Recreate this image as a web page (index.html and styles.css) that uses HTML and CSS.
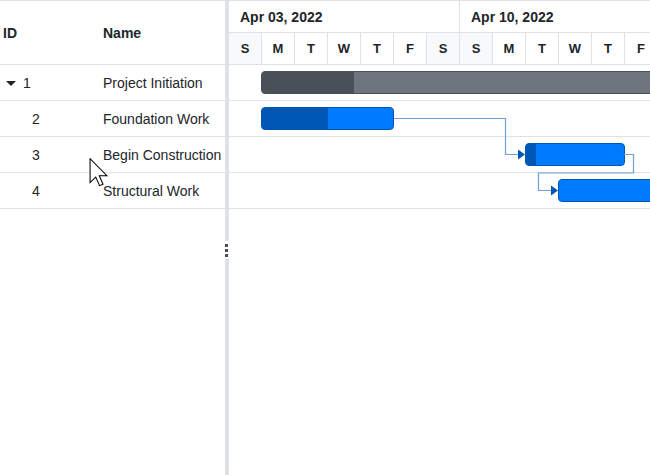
FILE: index.html
```html
<!DOCTYPE html>
<html>
<head>
<meta charset="utf-8">
<link rel="stylesheet" href="styles.css">
</head>
<body>
<div class="gantt">
  <div class="grid">
    <div class="grid-header">
      <div class="col-id">ID</div>
      <div class="col-name">Name</div>
    </div>
    <div class="grid-row">
      <div class="col-id parent"><span class="caret"></span>1</div>
      <div class="col-name">Project Initiation</div>
    </div>
    <div class="grid-row">
      <div class="col-id child">2</div>
      <div class="col-name">Foundation Work</div>
    </div>
    <div class="grid-row">
      <div class="col-id child">3</div>
      <div class="col-name">Begin Construction</div>
    </div>
    <div class="grid-row">
      <div class="col-id child">4</div>
      <div class="col-name">Structural Work</div>
    </div>
  </div>
  <div class="splitter">
    <div class="handle"><span class="dot"></span><span class="dot"></span><span class="dot"></span></div>
  </div>
  <div class="chart">
    <div class="chart-header">
      <div class="months">
        <div class="month">Apr 03, 2022</div>
        <div class="month">Apr 10, 2022</div>
      </div>
      <div class="days">
        <div class="day weekend">S</div>
        <div class="day">M</div>
        <div class="day">T</div>
        <div class="day">W</div>
        <div class="day">T</div>
        <div class="day">F</div>
        <div class="day weekend">S</div>
        <div class="day weekend">S</div>
        <div class="day">M</div>
        <div class="day">T</div>
        <div class="day">W</div>
        <div class="day">T</div>
        <div class="day">F</div>
      </div>
    </div>
    <div class="chart-body">
      <div class="chart-row">
        <div class="bar summary" style="left:32px;width:420px"><div class="progress" style="width:92px"></div></div>
      </div>
      <div class="chart-row">
        <div class="bar task" style="left:32px;width:133px"><div class="progress" style="width:66px"></div></div>
      </div>
      <div class="chart-row">
        <div class="bar task" style="left:296px;width:100px"><div class="progress" style="width:10px"></div></div>
      </div>
      <div class="chart-row">
        <div class="bar task" style="left:329px;width:200px"><div class="progress" style="width:0px"></div></div>
      </div>
      <svg class="links" width="421" height="150" viewBox="0 0 421 150">
        <polyline points="165,53.5 276.5,53.5 276.5,89.5 290,89.5" fill="none" stroke="#6fa0d8" stroke-width="1.2"/>
        <polygon points="289,84.5 296,89.5 289,94.5" fill="#0056b3"/>
        <polyline points="395,89.5 404.5,89.5 404.5,108 309.5,108 309.5,125.5 323,125.5" fill="none" stroke="#6fa0d8" stroke-width="1.2"/>
        <polygon points="322,120.5 329,125.5 322,130.5" fill="#0056b3"/>
      </svg>
    </div>
  </div>
  <svg class="cursor" width="20" height="29" viewBox="0 0 13 19.5">
    <path d="M0.5,0.5 L0.5,16.5 L4.3,12.8 L6.9,18.6 L9.2,17.6 L6.7,11.9 L11.8,11.9 Z" fill="#fff" stroke="#000" stroke-width="0.7" stroke-linejoin="miter"/>
  </svg>
</div>
</body>
</html>
```

FILE: styles.css
```css
html, body {
  margin: 0;
  padding: 0;
  background: #fff;
}

.gantt {
  position: relative;
  display: flex;
  height: 475px;
  box-sizing: border-box;
  border-top: 1px solid #dee2e6;
  font-family: "Liberation Sans", Arial, sans-serif;
  color: #212529;
  overflow: hidden;
}

.grid {
  width: 225px;
  flex: none;
}

.grid-header {
  height: 63px;
  border-bottom: 1px solid #dee2e6;
  display: flex;
  align-items: center;
  font-size: 14px;
  font-weight: bold;
}

.col-id {
  width: 100px;
  padding-left: 3px;
  flex: none;
  display: flex;
  align-items: center;
}

.col-id.parent {
  width: 97px;
  padding-left: 6px;
}

.col-id.child {
  width: 71px;
  padding-left: 32px;
}

.caret {
  width: 0;
  height: 0;
  border-left: 5px solid transparent;
  border-right: 5px solid transparent;
  border-top: 5px solid #212529;
  margin-right: 7px;
  margin-top: 1px;
}

.col-name {
  flex: 1;
  white-space: nowrap;
}

.grid-row {
  height: 35px;
  border-bottom: 1px solid #dee2e6;
  display: flex;
  align-items: center;
  font-size: 14px;
}

.splitter {
  width: 4px;
  flex: none;
  background: #dee2e6;
}

.handle {
  margin-top: 240px;
  height: 18px;
  background: #fff;
  display: flex;
  flex-direction: column;
  gap: 2px;
  padding-top: 3px;
  box-sizing: border-box;
}

.dot {
  display: block;
  width: 3px;
  height: 3px;
  background: #4a4f55;
}

.chart {
  flex: 1;
  min-width: 0;
  overflow: hidden;
}

.months {
  display: flex;
  height: 31px;
  border-bottom: 1px solid #dee2e6;
}

.month {
  flex: none;
  width: 231px;
  box-sizing: border-box;
  border-right: 1px solid #dee2e6;
  padding-left: 11px;
  display: flex;
  align-items: center;
  font-size: 14px;
  font-weight: bold;
  white-space: nowrap;
}

.days {
  display: flex;
  height: 31px;
  border-bottom: 1px solid #dee2e6;
}

.day {
  flex: none;
  width: 33px;
  box-sizing: border-box;
  border-right: 1px solid #dee2e6;
  display: flex;
  align-items: center;
  justify-content: center;
  font-size: 13px;
  font-weight: bold;
}

.day.weekend {
  background: #f8f9fa;
}

.chart-body {
  position: relative;
}

.chart-row {
  position: relative;
  height: 35px;
  border-bottom: 1px solid #dee2e6;
}

.bar {
  position: absolute;
  top: 6px;
  height: 23px;
  box-sizing: border-box;
  border-radius: 4px;
  overflow: hidden;
}

.bar .progress {
  height: 100%;
}

.bar.summary {
  background: #6c757d;
  border: 1px solid #495057;
}

.bar.summary .progress {
  background: #495057;
}

.bar.task {
  background: #007bff;
  border: 1px solid #0056b3;
}

.bar.task .progress {
  background: #0056b3;
}

.links {
  position: absolute;
  left: 0;
  top: 0;
  overflow: visible;
}

.cursor {
  position: absolute;
  left: 89px;
  top: 157px;
}
```
